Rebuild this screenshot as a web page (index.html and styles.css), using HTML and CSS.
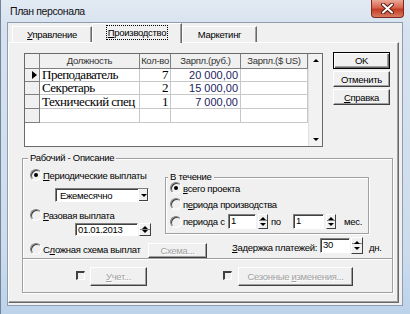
FILE: index.html
```html
<!DOCTYPE html>
<html lang="ru">
<head>
    <meta charset="UTF-8">
    <title>План персонала</title>
    <link rel="stylesheet" href="styles.css">
</head>
<body>
    <div class="window">
        <div class="titlebar">
            <span class="title">План персонала</span>
            <span class="close">
                <svg width="13" height="11" viewBox="0 0 13 11">
                    <path d="M2 1.5 L11 9.5 M11 1.5 L2 9.5" stroke="#5a1d12" stroke-width="4" stroke-linecap="round"/>
                    <path d="M2 1.5 L11 9.5 M11 1.5 L2 9.5" stroke="#fff" stroke-width="2" stroke-linecap="round"/>
                </svg>
            </span>
        </div>

        <div class="client">
            <div class="tabs">
                <div class="tab"><span><u>У</u>правление</span></div>
                <div class="tab active"><span class="focus"><u>П</u>роизводство</span></div>
                <div class="tab"><span>Маркетинг</span></div>
            </div>

            <div class="panel">
                <div class="top-row">
                    <div class="grid">
                        <div class="grid-body">
                            <div class="cell ind"></div>
                            <div class="cell hd">Должность</div>
                            <div class="cell hd">Кол-во</div>
                            <div class="cell hd">Зарпл.(руб.)</div>
                            <div class="cell hd">Зарпл.($ US)</div>

                            <div class="cell ind"><span class="arrow"></span></div>
                            <div class="cell tm">Преподаватель</div>
                            <div class="cell tm num">7</div>
                            <div class="cell rub num">20 000,00</div>
                            <div class="cell"></div>

                            <div class="cell ind"></div>
                            <div class="cell tm">Секретарь</div>
                            <div class="cell tm num">2</div>
                            <div class="cell rub num">15 000,00</div>
                            <div class="cell"></div>

                            <div class="cell ind"></div>
                            <div class="cell tm">Технический спец</div>
                            <div class="cell tm num">1</div>
                            <div class="cell rub num">7 000,00</div>
                            <div class="cell"></div>

                            <div class="cell ind"></div>
                            <div class="cell"></div>
                            <div class="cell"></div>
                            <div class="cell"></div>
                            <div class="cell"></div>
                        </div>
                        <div class="scrollbar">
                            <span class="tri up"></span>
                            <span class="tri down"></span>
                        </div>
                    </div>

                    <div class="side">
                        <div class="btn default"><span>OK</span></div>
                        <div class="btn"><span>Отменить</span></div>
                        <div class="btn"><span><u>С</u>правка</span></div>
                    </div>
                </div>

                <div class="group">
                    <span class="group-label">Рабочий - Описание</span>

                    <div class="pay-top">
                        <div class="left-col">
                            <div class="opt first"><span class="radio on"></span><span><u>П</u>ериодические выплаты</span></div>
                            <div class="combo">
                                <span class="combo-text">Ежемесячно</span>
                                <span class="drop"><span class="tri down"></span></span>
                            </div>
                            <div class="opt second"><span class="radio"></span><span><u>Р</u>азовая выплата</span></div>
                            <div class="date-row">
                                <div class="edit date">01.01.2013</div>
                                <div class="spin"><span class="tri up"></span><span class="tri down"></span></div>
                            </div>
                        </div>

                        <div class="period">
                            <span class="group-label">В течение</span>
                            <div class="opt"><span class="radio on"></span><span><u>в</u>сего проекта</span></div>
                            <div class="opt"><span class="radio"></span><span>п<u>е</u>риода производства</span></div>
                            <div class="opt range">
                                <span class="radio"></span>
                                <span class="range-label">перио<u>д</u>а с</span>
                                <div class="edit small">1</div>
                                <div class="spin"><span class="tri up"></span><span class="tri down"></span></div>
                                <span class="by">по</span>
                                <div class="edit small wide">1</div>
                                <div class="spin"><span class="tri up"></span><span class="tri down"></span></div>
                                <span class="months">мес.</span>
                            </div>
                        </div>
                    </div>

                    <div class="pay-mid">
                        <div class="opt complex"><span class="radio"></span><span>С<u>л</u>ожная схема выплат</span></div>
                        <div class="btn disabled scheme"><span>Схема...</span></div>
                        <span class="delay-label"><u>З</u>адержка платежей:</span>
                        <div class="edit delay">30</div>
                        <div class="spin tall"><span class="tri up"></span><span class="tri down"></span></div>
                        <span class="days">дн.</span>
                    </div>

                    <div class="pay-bottom">
                        <span class="check first-check"></span>
                        <div class="btn disabled account"><span><u>У</u>чет...</span></div>
                        <span class="check second-check"></span>
                        <div class="btn disabled seasonal"><span>Сезонные <u>и</u>зменения...</span></div>
                    </div>
                </div>
            </div>
        </div>
    </div>
</body>
</html>
```

FILE: styles.css
```css
* {
    margin: 0;
    padding: 0;
    box-sizing: border-box;
}

body {
    width: 410px;
    height: 314px;
    overflow: hidden;
    background-color: #c8daec;
    font-family: "Liberation Sans", Arial, sans-serif;
    font-size: 9.5px;
    letter-spacing: -0.3px;
    color: #000;
}

u {
    text-decoration: underline;
    text-underline-offset: 1px;
}

/* окно */
.window {
    width: 410px;
    height: 314px;
    background: linear-gradient(#e2eaf3, #d6e2ef 30px, #cddcec 250px, #bcd3ea);
    border-left: 1px solid #72849a;
}

.titlebar {
    height: 22px;
    display: flex;
    align-items: flex-start;
    padding-left: 9px;
}

.title {
    margin-top: 5px;
    font-size: 10.5px;
    letter-spacing: -0.4px;
    color: #111;
}

.close {
    margin-left: auto;
    margin-right: 6px;
    width: 33px;
    height: 18px;
    border: 1px solid #7a2b1e;
    border-top: none;
    border-radius: 0 0 4px 4px;
    background: linear-gradient(#eaa898, #d8644d 45%, #c23d25 55%, #d97a5f);
    display: flex;
    align-items: center;
    justify-content: center;
}

.client {
    margin-left: 6px;
    width: 396px;
    height: 284px;
    background-color: #f0f0f0;
    border: 1px solid #8f9db0;
}

/* вкладки */
.tabs {
    display: flex;
    height: 19px;
    padding-left: 4px;
}

.tab {
    margin-top: 3px;
    height: 16px;
    display: flex;
    align-items: center;
    justify-content: center;
    border-top: 1px solid #fff;
    border-left: 1px solid #fff;
    border-right: 1px solid #696969;
    box-shadow: inset -1px 0 0 #a0a0a0;
    width: 80px;
}

.tab.active {
    margin-top: 0;
    height: 20px;
    width: 90px;
    position: relative;
    z-index: 1;
    background-color: #f0f0f0;
    padding-bottom: 2px;
}

.tab:last-child {
    width: 75px;
}

.focus {
    outline: 1px dotted #000;
    outline-offset: 1px;
}

.panel {
    width: 391px;
    height: 261px;
    border: 1px solid;
    border-color: #fff #696969 #696969 #fff;
    box-shadow: inset -1px -1px 0 #a0a0a0;
    padding: 10px 0 0 13px;
}

.top-row {
    display: flex;
    align-items: flex-start;
}

/* таблица */
.grid {
    width: 299px;
    height: 94px;
    margin-left: 2px;
    border: 1px solid #696969;
    display: flex;
    background-color: #fff;
}

.grid-body {
    width: 283px;
    display: grid;
    grid-template-columns: 15px 100px 31px 70px 67px;
    grid-template-rows: 15px 13px 13px 14px 14px;
    align-content: start;
}

.cell {
    border-right: 1px solid #c8c8c8;
    border-bottom: 1px solid #c8c8c8;
    padding: 0 2px;
    white-space: nowrap;
    overflow: hidden;
    display: flex;
    align-items: center;
    line-height: 12px;
}

.hd {
    background-color: #f0f0f0;
    border-color: #808080;
    justify-content: center;
    color: #333;
}

.ind {
    background-color: #f0f0f0;
    border-color: #808080;
    padding-left: 7px;
}

.arrow {
    width: 0;
    height: 0;
    border-top: 4px solid transparent;
    border-bottom: 4px solid transparent;
    border-left: 5px solid #000;
}

.tm {
    font-family: "Liberation Serif", "Times New Roman", serif;
    font-size: 13px;
    letter-spacing: -0.5px;
}

.num {
    justify-content: flex-end;
}

.rub {
    font-size: 11px;
    letter-spacing: 0;
    color: #1d2260;
}

.scrollbar {
    width: 14px;
    background-color: #f2f2f2;
    border-left: 1px solid #e0e0e0;
    display: flex;
    flex-direction: column;
    justify-content: space-between;
    align-items: center;
    padding: 5px 0 5px;
}

.tri {
    width: 0;
    height: 0;
    border-left: 3px solid transparent;
    border-right: 3px solid transparent;
}

.tri.up {
    border-bottom: 3px solid #000;
}

.tri.down {
    border-top: 3px solid #000;
}

/* кнопки */
.side {
    margin-left: 10px;
    margin-top: -1px;
    width: 57px;
    display: flex;
    flex-direction: column;
    gap: 2px;
}

.btn {
    height: 16px;
    display: flex;
    align-items: center;
    justify-content: center;
    border: 1px solid;
    border-color: #fff #404040 #404040 #fff;
    box-shadow: inset -1px -1px 0 #a0a0a0;
    background-color: #f0f0f0;
    white-space: nowrap;
}

.btn.default {
    height: 17px;
    border: 1px solid #000;
    box-shadow: inset 1px 1px 0 #fff, inset -1px -1px 0 #696969, inset -2px -2px 0 #a0a0a0;
}

.btn.disabled {
    color: #a0a0a0;
    text-shadow: 1px 1px 0 #fff;
}

/* группа */
.group {
    position: relative;
    width: 371px;
    height: 135px;
    margin-top: 11px;
    border: 1px solid #a0a0a0;
    box-shadow: inset 1px 1px 0 #fff, 1px 1px 0 #fff;
}

.group-label {
    position: absolute;
    top: -7px;
    left: 5px;
    padding: 0 2px;
    background-color: #f0f0f0;
    line-height: 12px;
}

.pay-top {
    display: flex;
    height: 77px;
}

.left-col {
    width: 142px;
}

.opt {
    display: flex;
    align-items: center;
    gap: 1px;
    height: 12px;
    white-space: nowrap;
}

.opt.first {
    margin-top: 10px;
    padding-left: 7px;
}

.opt.second {
    margin-top: 7px;
    padding-left: 7px;
}

.radio {
    position: relative;
    flex: none;
    width: 12px;
    height: 12px;
    border-radius: 50%;
    border: 1px solid;
    border-color: #808080 #fff #fff #808080;
    box-shadow: inset 1px 1px 0 #404040;
}

.radio.on::after {
    content: "";
    position: absolute;
    left: 3px;
    top: 3px;
    width: 4px;
    height: 4px;
    border-radius: 50%;
    background-color: #000;
}

.combo {
    margin: 7px 0 0 32px;
    width: 94px;
    height: 14px;
    display: flex;
    background-color: #fff;
    border: 1px solid;
    border-color: #808080 #fff #fff #808080;
    box-shadow: inset 1px 1px 0 #404040;
}

.combo-text {
    flex: 1;
    padding: 1px 0 0 4px;
    line-height: 11px;
}

.drop {
    width: 10px;
    display: flex;
    align-items: center;
    justify-content: center;
    background-color: #f0f0f0;
    border-left: 1px solid #fff;
    box-shadow: inset -1px -1px 0 #404040;
}

.date-row {
    display: flex;
    margin: 2px 0 0 52px;
}

.edit {
    height: 13px;
    background-color: #fff;
    border: 1px solid;
    border-color: #808080 #fff #fff #808080;
    box-shadow: inset 1px 1px 0 #404040;
    padding: 0 0 0 2px;
    line-height: 11px;
}

.edit.date {
    width: 63px;
}

.spin {
    width: 12px;
    height: 13px;
    margin-left: 1px;
    display: flex;
    flex-direction: column;
    justify-content: space-around;
    align-items: center;
    background-color: #f0f0f0;
    border: 1px solid;
    border-color: #fff #404040 #404040 #fff;
    box-shadow: inset 0 5px 0 #f0f0f0, inset 0 6px 0 #808080;
    padding: 1px 0;
}

.period {
    position: relative;
    margin-top: 18px;
    width: 204px;
    height: 57px;
    border: 1px solid #a0a0a0;
    box-shadow: inset 1px 1px 0 #fff, 1px 1px 0 #fff;
    padding: 4px 0 0 4px;
    display: flex;
    flex-direction: column;
    gap: 4px;
}

.period .group-label {
    left: 2px;
}

.opt.range {
    height: 15px;
    gap: 0;
}

.range-label {
    width: 45px;
    margin-left: 1px;
}

.edit.small {
    width: 28px;
    height: 15px;
}

.edit.wide {
    width: 31px;
}

.range .spin {
    width: 10px;
    height: 15px;
    margin-left: 2px;
}

.by {
    width: 22px;
    margin-left: 3px;
}

.months {
    margin-left: 8px;
}

.pay-mid {
    display: flex;
    align-items: flex-start;
    height: 21px;
    margin-top: 1px;
}

.opt.complex {
    width: 125px;
    margin-top: 6px;
    padding-left: 7px;
}

.btn.scheme {
    width: 59px;
    height: 15px;
    margin-top: 6px;
}

.delay-label {
    width: 88px;
    margin: 5px 0 0 25px;
    line-height: 12px;
    white-space: nowrap;
}

.edit.delay {
    width: 30px;
    height: 15px;
    margin-top: 1px;
}

.spin.tall {
    height: 17px;
}

.days {
    margin: 5px 0 0 6px;
}

.pay-bottom {
    display: flex;
    align-items: flex-start;
    height: 33px;
    border-top: 1px solid #a0a0a0;
    box-shadow: inset 0 1px 0 #fff;
    padding-top: 8px;
}

.check {
    width: 9px;
    height: 9px;
    margin-top: 4px;
    border-top: 2px solid #404040;
    border-left: 2px solid #404040;
    border-right: 1px solid #fff;
    border-bottom: 1px solid #fff;
}

.first-check {
    margin-left: 53px;
}

.btn.account {
    width: 57px;
    height: 19px;
    margin-left: 5px;
}

.second-check {
    margin-left: 76px;
}

.btn.seasonal {
    width: 115px;
    height: 19px;
    margin-left: 6px;
}
```
